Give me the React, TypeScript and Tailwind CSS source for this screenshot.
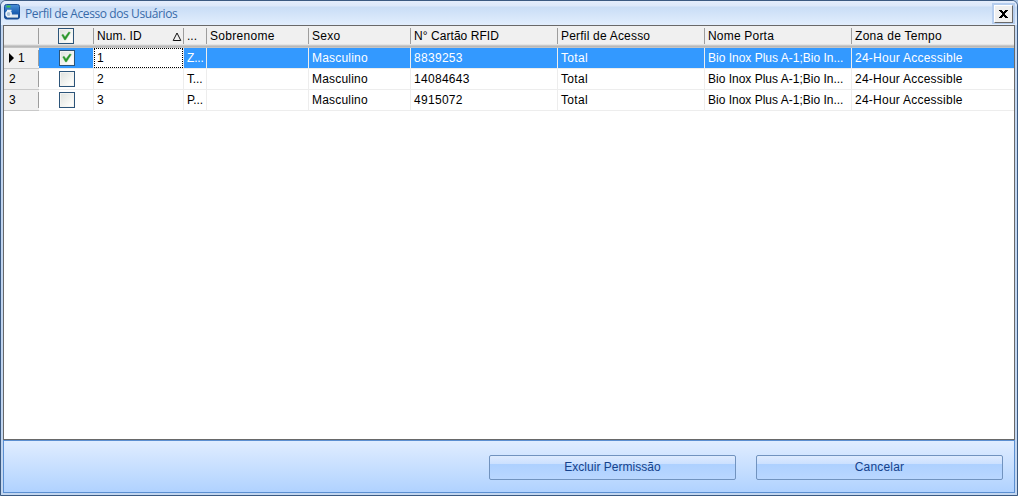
import type { ReactNode } from 'react';

const COLS =
  'grid grid-cols-[35px_55px_90px_23px_102px_102px_147px_147px_147px_162px]';

const rows = [
  { n: '1', id: '1', name: 'Z...', card: '8839253', checked: true },
  { n: '2', id: '2', name: 'T...', card: '14084643', checked: false },
  { n: '3', id: '3', name: 'P...', card: '4915072', checked: false },
];

function Check({ checked }: { checked: boolean }) {
  return (
    <svg className="shrink-0" width="16" height="16" viewBox="0 0 16 16">
      <defs>
        <linearGradient id="box" x1="0" y1="0" x2="1" y2="1">
          <stop offset="0" stopColor="#dcdfdc" />
          <stop offset="0.75" stopColor="#fbfbf8" />
          <stop offset="1" stopColor="#ffffff" />
        </linearGradient>
      </defs>
      <rect x="0.5" y="0.5" width="15" height="15" fill="url(#box)" stroke="#2c5479" />
      <rect x="1.5" y="1.5" width="13" height="13" fill="none" stroke="#f4f4f1" />
      {checked && (
        <path d="M3.6 7 L5 6 L7 8.8 L10.8 3.8 L12.4 4.6 L7.6 12 L6.4 12 Z" fill="#2b952b" stroke="#6cb96c" strokeWidth="0.4" />
      )}
    </svg>
  );
}

function HeaderCell({ children, className = 'pl-[3px]' }: { children?: ReactNode; className?: string }) {
  return (
    <div className="flex h-[22px] items-start overflow-hidden pt-[2px]">
      <div className={`flex h-4 min-w-0 flex-1 items-center whitespace-nowrap ${className}`}>{children}</div>
      <div className="h-4 w-px shrink-0 bg-[#9d9d9d]" />
    </div>
  );
}

function Cell({ children, selected, className = 'pl-[3px]' }: { children?: ReactNode; selected: boolean; className?: string }) {
  return (
    <div
      className={`h-[21px] overflow-hidden whitespace-nowrap border-b border-[#ededed] leading-[20px] ${
        selected ? 'bg-[#3399ff] text-white' : 'bg-white'
      } ${className}`}
    >
      {children}
    </div>
  );
}

function ActionButton({ children }: { children: ReactNode }) {
  return (
    <button className="h-[25px] w-[247px] rounded-[2px] border border-[#7193bf] bg-[linear-gradient(180deg,#deebfe_0px,#cbe0ff_8px,#add0ff_8px,#b9d7ff_23px)] text-center leading-[23px] text-[#15428b]">
      {children}
    </button>
  );
}

export default function App() {
  return (
    <div className="h-[496px] w-[1018px] bg-[#abc4e3]">
      <div className="flex h-[496px] w-[1018px] flex-col overflow-hidden rounded-t-[6px] border border-[#3b5a82] bg-[#c2d6f0] px-[2px] pb-[2px] font-['Liberation_Sans',Arial,sans-serif] text-[12px] text-black">
        <header className="-mx-[2px] flex h-6 shrink-0 items-start bg-[linear-gradient(180deg,#e4edfc_0px,#dce8fa_5px,#c9ddf6_6px,#e2eefd_24px)] pl-[3px] pr-[2px]">
          <svg width="16" height="16" viewBox="0 0 16 16" className="mt-[3px] shrink-0">
            <defs>
              <linearGradient id="appicon" x1="0" y1="0" x2="0" y2="1">
                <stop offset="0" stopColor="#4a90d8" />
                <stop offset="0.55" stopColor="#1d62b4" />
                <stop offset="1" stopColor="#174b94" />
              </linearGradient>
            </defs>
            <rect x="0.5" y="0.5" width="15" height="14.5" rx="2" fill="url(#appicon)" stroke="#1a4f96" />
            <rect x="2.5" y="1.5" width="4" height="2" fill="#3fc24a" />
            <path d="M3 6.5h4.5" stroke="#e8f1f8" strokeWidth="1.6" />
            <path d="M5 10.5h9v2.5H5z" fill="#dfe9f2" />
            <circle cx="4.6" cy="10" r="2.6" fill="#a9c3da" stroke="#f1f6fa" strokeWidth="1.4" />
            <path d="M3 13.5h11" stroke="#8fa9c0" strokeWidth="1" />
          </svg>
          <h1 className="ml-[5px] mt-[5px] whitespace-nowrap font-['Open_Sans',sans-serif] text-[12px] font-normal leading-4 tracking-[-0.4px] text-[#386ba9]">
            Perfil de Acesso dos Usuários
          </h1>
          <button className="ml-auto mt-[2px] flex h-[21px] w-[23px] items-center justify-center bg-[#b5cdee]">
            <span className="flex h-[18px] w-[19px] items-center justify-center border border-b-[#696969] border-l-white border-r-[#696969] border-t-white bg-[#f0f0f0]">
              <svg width="9" height="8" viewBox="0 0 9 8" shapeRendering="crispEdges">
                <path d="M0 0h3v1h1v1h1V1h1V0h3v1H8v1H7v1H6v2h1v1h1v1h1v1H6V7H5V6H4v1H3v1H0V7h1V6h1V5h1V3H2V2H1V1H0z" fill="#000" />
              </svg>
            </span>
          </button>
        </header>

        <main className="h-[415px] shrink-0 border border-[#696969] bg-white">
          <div className={`${COLS} bg-[linear-gradient(180deg,#f0f0f0_0px,#f0f0f0_18px,#d9d9d9_19px,#b8b8b8_20px,#b8b8b8_21px,#d0d0d0_22px)]`}>
            <HeaderCell />
            <HeaderCell className="pl-[19px]">
              <Check checked />
            </HeaderCell>
            <HeaderCell className="pl-[3px] tracking-[0.1px]">
              Num. ID
              <svg className="ml-auto mr-px" width="10" height="9" viewBox="0 0 10 9">
                <path d="M5 1 L8.8 8.5 H1.2 Z" fill="none" stroke="#111" />
              </svg>
            </HeaderCell>
            <HeaderCell>...</HeaderCell>
            <HeaderCell className="pl-[3px] tracking-[0.3px]">Sobrenome</HeaderCell>
            <HeaderCell className="pl-[3px] tracking-[0.25px]">Sexo</HeaderCell>
            <HeaderCell className="pl-[3px] tracking-[0.06px]">N° Cartão RFID</HeaderCell>
            <HeaderCell className="pl-[3px] tracking-[0.2px]">Perfil de Acesso</HeaderCell>
            <HeaderCell className="pl-[3px] tracking-[0.2px]">Nome Porta</HeaderCell>
            <div className="pl-[3px] pt-[2px] leading-4 tracking-[0.3px]">Zona de Tempo</div>
          </div>

          {rows.map((r) => (
            <div key={r.n} className={COLS}>
              <div className="flex h-[21px] items-center border-b border-[#c9c9c9] bg-[#f0f0f0]">
                {r.checked ? (
                  <svg className="ml-[5px] mr-[4px]" width="5" height="10" viewBox="0 0 5 10">
                    <path d="M0 0 L5 5 L0 10 Z" fill="#000" />
                  </svg>
                ) : (
                  <span className="w-[5px]" />
                )}
                <span>{r.n}</span>
                <span className="ml-auto h-4 w-px bg-[#9d9d9d]" />
              </div>
              <Cell selected={r.checked} className="flex items-center border-r pl-[20px]">
                <Check checked={r.checked} />
              </Cell>
              {r.checked ? (
                <div className="h-[21px] border-b border-r border-[#ededed] bg-white">
                  <div className="h-5 border border-dotted border-black pl-[2px] leading-[18px]">{r.id}</div>
                </div>
              ) : (
                <Cell selected={false} className="border-r pl-[3px]">{r.id}</Cell>
              )}
              <Cell selected={r.checked} className="border-r pl-[3px] tracking-[-0.15px]">{r.name}</Cell>
              <Cell selected={r.checked} className="border-r" />
              <Cell selected={r.checked} className="border-r pl-[3px] tracking-[0.2px]">Masculino</Cell>
              <Cell selected={r.checked} className="border-r pl-[3px] tracking-[0.3px]">{r.card}</Cell>
              <Cell selected={r.checked} className="border-r pl-[3px] tracking-[0.3px]">Total</Cell>
              <Cell selected={r.checked} className="border-r pl-[3px] tracking-[0px]">Bio Inox Plus A-1;Bio In...</Cell>
              <Cell selected={r.checked} className="pl-[3px] tracking-[0.24px]">24-Hour Accessible</Cell>
            </div>
          ))}
        </main>

        <footer className="flex h-[53px] shrink-0 items-start justify-end gap-5 border border-[#5b8fd1] bg-[linear-gradient(180deg,#e0edff,#b0d2ff)] pr-[11px] pt-[14px]">
          <ActionButton>
            <span className="tracking-[0.03px]">Excluir Permissão</span>
          </ActionButton>
          <ActionButton>
            <span className="tracking-[0.2px]">Cancelar</span>
          </ActionButton>
        </footer>
      </div>
    </div>
  );
}
